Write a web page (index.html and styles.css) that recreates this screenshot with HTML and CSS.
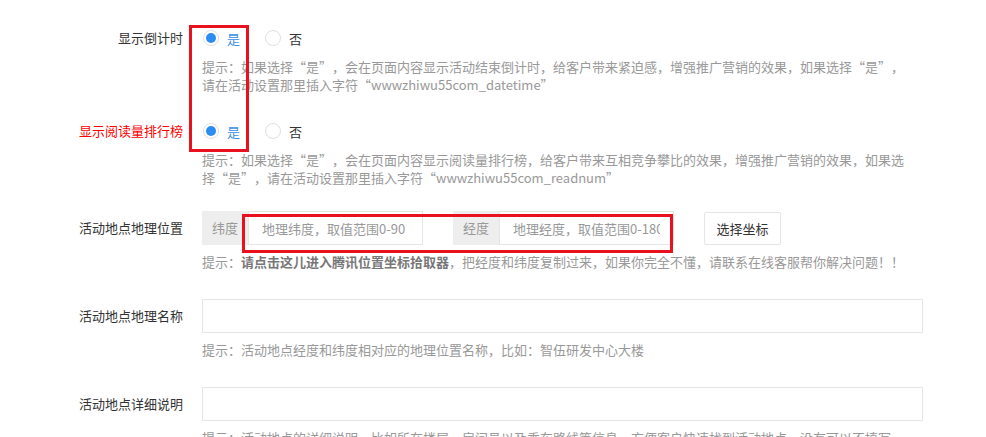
FILE: index.html
```html
<!DOCTYPE html>
<html lang="zh-CN">
<head>
    <meta charset="UTF-8">
    <meta name="viewport" content="width=device-width, initial-scale=1.0">
    <title>活动设置</title>

    <link rel="stylesheet" href="styles.css">
</head>
<body>

    <div class="form">
        <div class="form-item radio-item">
            <label class="form-label">显示倒计时</label>
            <div class="form-block">
                <div class="radio-group">
                    <span class="radio checked"><i></i>是</span>
                    <span class="radio"><i></i>否</span>
                </div>
                <div class="form-tip">提示：如果选择“是”，会在页面内容显示活动结束倒计时，给客户带来紧迫感，增强推广营销的效果，如果选择“是”，<br>请在活动设置那里插入字符“wwwzhiwu55com_datetime”</div>
            </div>
        </div>

        <div class="form-item radio-item">
            <label class="form-label red">显示阅读量排行榜</label>
            <div class="form-block">
                <div class="radio-group">
                    <span class="radio checked"><i></i>是</span>
                    <span class="radio"><i></i>否</span>
                </div>
                <div class="form-tip">提示：如果选择“是”，会在页面内容显示阅读量排行榜，给客户带来互相竞争攀比的效果，增强推广营销的效果，如果选<br>择“是”，请在活动设置那里插入字符“wwwzhiwu55com_readnum”</div>
            </div>
        </div>

        <div class="form-item">
            <label class="form-label">活动地点地理位置</label>
            <div class="form-block">
                <div class="input-group">
                    <span class="addon">纬度</span>
                    <input type="text" class="input" placeholder="地理纬度，取值范围0-90">
                    <span class="addon">经度</span>
                    <input type="text" class="input" placeholder="地理经度，取值范围0-180">
                    <button class="btn">选择坐标</button>
                </div>
                <div class="form-tip">提示：<b>请点击这儿进入腾讯位置坐标拾取器</b>，把经度和纬度复制过来，如果你完全不懂，请联系在线客服帮你解决问题！！</div>
            </div>
        </div>

        <div class="form-item">
            <label class="form-label">活动地点地理名称</label>
            <div class="form-block">
                <input type="text" class="input block">
                <div class="form-tip">提示：活动地点经度和纬度相对应的地理位置名称，比如：智伍研发中心大楼</div>
            </div>
        </div>

        <div class="form-item">
            <label class="form-label">活动地点详细说明</label>
            <div class="form-block">
                <input type="text" class="input block">
                <div class="form-tip">提示：活动地点的详细说明，比如所在楼层、房间号以及乘车路线等信息，方便客户快速找到活动地点，没有可以不填写。</div>
            </div>
        </div>
    </div>

    <!-- annotation marks -->
    <div class="mark mark-radio"></div>
    <div class="mark mark-geo"></div>

</body>
</html>
```

FILE: styles.css
```css
* {
    margin: 0;
    padding: 0;
    box-sizing: border-box;
}

html,
body {
    overflow: hidden;
}

body {
    font-family: "Noto Sans CJK SC", "Microsoft YaHei", sans-serif;
    font-size: 13px;
    color: #333;
    background: #fff;
    text-spacing-trim: space-all;
}

.form {
    padding-top: 25px;
}

.form-item {
    display: flex;
    margin-bottom: 28px;
}

.form-item.radio-item {
    margin-bottom: 24px;
}

.form-label {
    width: 183px;
    flex-shrink: 0;
    text-align: right;
    height: 34px;
    line-height: 34px;
}

.radio-item .form-label {
    height: 26px;
    line-height: 26px;
}

.form-label.red {
    color: #f00;
}

.form-block {
    width: 721px;
    margin-left: 19px;
}

.radio-group {
    display: flex;
    align-items: center;
    height: 26px;
    margin-left: 1px;
}

.radio {
    display: flex;
    align-items: center;
    margin-right: 25px;
}

.radio i {
    width: 16px;
    height: 16px;
    border: 1px solid #dcdfe6;
    border-radius: 50%;
    margin-right: 8px;
    display: flex;
    align-items: center;
    justify-content: center;
}

.radio.checked {
    color: #3a8ee6;
}

.radio.checked i::after {
    content: "";
    width: 10px;
    height: 10px;
    border-radius: 50%;
    background: #2d8cf0;
}

.form-tip {
    color: #999;
    line-height: 18px;
    margin-top: 8px;
}

.radio-item .form-tip {
    margin-top: 7px;
}

.form-tip b {
    color: #777;
}

.input-group {
    display: flex;
    align-items: center;
}

.addon {
    width: 46px;
    height: 34px;
    line-height: 34px;
    text-align: center;
    background: #eee;
    color: #999;
}

.input {
    height: 34px;
    border: 1px solid #e6e6e6;
    padding: 0 13px;
    font: inherit;
    color: #333;
    outline: none;
    background: #fff;
}

.input::placeholder {
    color: #999;
}

.input-group .input {
    width: 175px;
    margin-right: 30px;
}

.input.block {
    display: block;
    width: 721px;
}

.btn {
    width: 77px;
    height: 33px;
    border: 1px solid #e6e6e6;
    border-radius: 2px;
    background: #fff;
    font: inherit;
    color: #333;
}

.mark {
    position: absolute;
    border: 3px solid #e8111d;
}

.mark-radio {
    left: 189px;
    top: 25px;
    width: 60px;
    height: 127px;
}

.mark-geo {
    left: 242px;
    top: 214px;
    width: 431px;
    height: 39px;
}
```
